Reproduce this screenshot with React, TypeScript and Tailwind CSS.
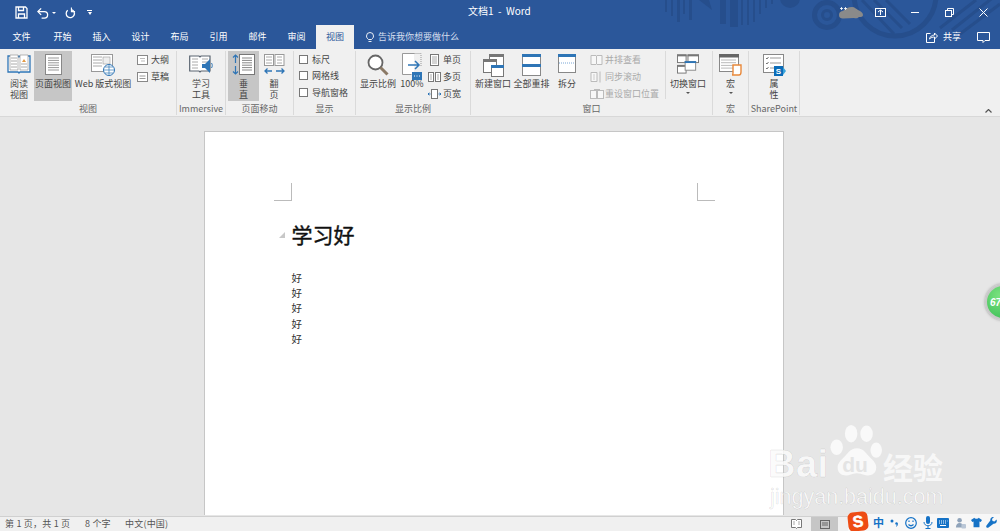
import React from "react";

const F = "font-['Noto_Sans_CJK_SC','Liberation_Sans',sans-serif]";

function Large({ w, selected, icon, label, label2, caret }: { w: number; selected?: boolean; icon: React.ReactNode; label: string; label2?: string; caret?: boolean }) {
  return (
    <div style={{ width: w }} className={`flex flex-col items-center h-[50px] shrink-0 ${selected ? "bg-[#c6c6c6]" : ""}`}>
      <div className="h-[27px] pt-[3px] flex items-start justify-center">{icon}</div>
      <div className="text-[9px] leading-[11px] text-[#444] whitespace-nowrap text-center">{label}</div>
      {label2 && <div className="text-[9px] leading-[11px] text-[#444] whitespace-nowrap text-center">{label2}</div>}
      {caret && <div className="mt-[3px] w-0 h-0 border-l-[2px] border-r-[2px] border-t-[2px] border-l-transparent border-r-transparent border-t-[#555]" />}
    </div>
  );
}

function Group({ w, label, children, pl = 0 }: { w: number; label: string; children: React.ReactNode; pl?: number }) {
  return (
    <div style={{ width: w, paddingLeft: pl }} className="h-[64px] shrink-0 border-r border-[#dadada] flex flex-col mt-[2px]">
      <div className="flex h-[52px] items-start">{children}</div>
      <div className="text-[9px] leading-[12px] text-[#666] text-center whitespace-nowrap" style={{ marginLeft: -pl }}>{label}</div>
    </div>
  );
}

function Small({ icon, label, dim }: { icon: React.ReactNode; label: string; dim?: boolean }) {
  return (
    <div className={`flex items-center h-[17px] gap-[1px] text-[9px] whitespace-nowrap ${dim ? "text-[#aaa]" : "text-[#444]"}`}>
      {icon}
      <span>{label}</span>
    </div>
  );
}

function Check({ label }: { label: string }) {
  return (
    <div className="flex items-center h-[16.500px] gap-[4px] text-[9px] text-[#444] whitespace-nowrap">
      <div className="w-[9px] h-[9px] border border-[#777] bg-white" />
      <span>{label}</span>
    </div>
  );
}

const Lines = ({ x, y, w, n, gap = 3, c = "#aaa" }: { x: number; y: number; w: number; n: number; gap?: number; c?: string }) => (
  <>
    {Array.from({ length: n }).map((_, i) => (
      <line key={i} x1={x} x2={x + w} y1={y + i * gap} y2={y + i * gap} stroke={c} strokeWidth="1" />
    ))}
  </>
);

const BookIcon = () => (
  <svg width="24" height="20" viewBox="0 0 24 20">
    <path d="M1 2h10l1 1 1-1h10v16H13l-1 1-1-1H1z" fill="#fff" stroke="#2e75b6" strokeWidth="1.300" />
    <path d="M3 1h8v15H3zM13 1h8v15h-8z" fill="#fff" stroke="#999" strokeWidth=".7" />
    <Lines x={4} y={4} w={6} n={4} />
    <Lines x={14} y={10} w={6} n={2} />
    <path d="M15 8l2-3 2 3z" fill="#e39a45" />
  </svg>
);
const PageIcon = () => (
  <svg width="17" height="21" viewBox="0 0 17 21">
    <rect x=".5" y=".5" width="16" height="20" fill="#fff" stroke="#888" />
    <Lines x={3} y={4} w={11} n={6} gap={2.400} c="#999" />
  </svg>
);
const WebIcon = () => (
  <svg width="24" height="23" viewBox="0 0 24 23">
    <rect x=".5" y=".5" width="21" height="17" fill="#fff" stroke="#999" />
    <Lines x={2} y={3} w={9} n={4} />
    <rect x="12" y="3" width="7" height="7" fill="#eee" stroke="#999" strokeWidth=".6" />
    <circle cx="18" cy="16" r="5.500" fill="#fff" stroke="#2e75b6" />
    <path d="M12.500 16h11M18 10.500v11M14 13h8M14 19h8" stroke="#2e75b6" strokeWidth=".7" />
  </svg>
);
const SpeakBook = () => (
  <svg width="25" height="21" viewBox="0 0 25 21">
    <path d="M.7 2h9.300l1 1 1-1h9v15h-9l-1 1-1-1H.7z" fill="#fff" stroke="#5a6470" strokeWidth="1.200" />
    <Lines x={3} y={5} w={6} n={4} />
    <Lines x={13} y={5} w={6} n={2} />
    <path d="M13 10h3l5-5v14l-5-5h-3z" fill="#2e75b6" />
    <path d="M22.500 9c1 1.500 1 3.500 0 5" stroke="#2e75b6" fill="none" />
  </svg>
);
const VertIcon = () => (
  <svg width="23" height="21" viewBox="0 0 23 21">
    <rect x="7.500" y=".5" width="15" height="20" fill="#fff" stroke="#777" />
    <Lines x={10} y={4} w={10} n={6} gap={2.400} c="#888" />
    <path d="M3.500 1v8M3.500 12v8M1 3.500l2.500-2.500 2.500 2.500M1 17.500l2.500 2.500 2.500-2.500" stroke="#2e75b6" fill="none" strokeWidth="1.200" />
  </svg>
);
const FlipIcon = () => (
  <svg width="21" height="21" viewBox="0 0 21 21">
    <rect x=".5" y=".5" width="9" height="11" fill="#fff" stroke="#999" />
    <rect x="11" y=".5" width="9" height="11" fill="#fff" stroke="#999" />
    <Lines x={2} y={3} w={6} n={3} />
    <Lines x={13} y={3} w={5} n={3} />
    <path d="M1 17h7M3.500 14.500L1 17l2.500 2.500M12 17h8M17.500 14.500L20 17l-2.500 2.500" stroke="#2e75b6" fill="none" strokeWidth="1.300" />
  </svg>
);
const Magnifier = () => (
  <svg width="22" height="23" viewBox="0 0 22 23">
    <circle cx="8.500" cy="8.500" r="7" fill="#fff" stroke="#666" strokeWidth="1.800" />
    <path d="M13.500 13.500l7 7" stroke="#8b7a66" strokeWidth="3" />
  </svg>
);
const HundredIcon = () => (
  <svg width="20" height="27" viewBox="0 0 20 27" className="-mt-[1px]">
    <path d="M.5.5h12v0M.5.5v21h9" fill="none" stroke="#999" />
    <path d="M12.500.5h6.500v13" fill="none" stroke="#999" strokeDasharray="1 1" />
    <path d="M1 1h11v20H1z" fill="#fff" />
    <path d="M6 12h11M13 8l4 4-4 4" stroke="#2e75b6" fill="none" strokeWidth="1.500" />
    <rect x="10" y="19" width="10" height="8" fill="#2e75b6" />
    <path d="M12 23h1M14.500 23h1M17 23h1" stroke="#fff" />
  </svg>
);
const NewWin = () => (
  <svg width="21" height="23" viewBox="0 0 21 23">
    <rect x="6.500" y=".5" width="14" height="11" fill="#fff" stroke="#777" />
    <rect x="6" y="0" width="15" height="3" fill="#777" />
    <rect x=".5" y="5.500" width="13" height="13" fill="#fff" stroke="#777" />
    <rect x="0" y="5" width="14" height="3" fill="#777" />
    <rect x="8.500" y="11.500" width="12" height="11" fill="#fff" stroke="#777" />
    <rect x="8" y="11" width="13" height="3" fill="#2e75b6" />
  </svg>
);
const Arrange = () => (
  <svg width="19" height="22" viewBox="0 0 19 22">
    <rect x=".5" y=".5" width="18" height="21" fill="#fff" stroke="#888" />
    <rect x="0" y="0" width="19" height="3" fill="#2e75b6" />
    <rect x="0" y="10" width="19" height="3" fill="#2e75b6" />
  </svg>
);
const SplitIcon = () => (
  <svg width="18" height="19" viewBox="0 0 18 19">
    <rect x=".5" y=".5" width="17" height="18" fill="#fff" stroke="#888" />
    <rect x="0" y="0" width="18" height="3" fill="#2e75b6" />
    <path d="M1 9h16" stroke="#7aa7d6" strokeDasharray="1 1" />
  </svg>
);
const SwitchWin = () => (
  <svg width="22" height="20" viewBox="0 0 23 20">
    <rect x="11.500" y=".5" width="11" height="8" fill="#fff" stroke="#777" />
    <rect x=".5" y=".5" width="9" height="8" fill="#fff" stroke="#777" />
    <rect x=".5" y="11.500" width="9" height="8" fill="#fff" stroke="#777" />
    <rect x="0" y="0" width="10" height="2" fill="#777" />
    <rect x="11" y="0" width="12" height="2" fill="#777" />
    <rect x="0" y="11" width="10" height="2" fill="#777" />
    <rect x="8.500" y="7.500" width="11" height="9" fill="#fff" stroke="#888" />
    <rect x="8" y="7" width="12" height="2" fill="#2e75b6" />
  </svg>
);
const MacroIcon = () => (
  <svg width="23" height="22" viewBox="0 0 23 22">
    <rect x=".5" y=".5" width="19" height="17" fill="#fff" stroke="#888" />
    <rect x="0" y="0" width="20" height="3.500" fill="#666" />
    <Lines x={2} y={6} w={15} n={4} gap={2.700} c="#bbb" />
    <path d="M14 11h8v7c0 2-1 3-2 3h-7c1 0 1-1 1-2z" fill="#fff" stroke="#e8883a" strokeWidth="1.400" />
  </svg>
);
const PropIcon = () => (
  <svg width="23" height="23" viewBox="0 0 23 23">
    <rect x=".5" y=".5" width="20" height="18" fill="#fff" stroke="#888" />
    <path d="M3 4l1 1 1.500-2M3 9l1 1 1.500-2M3 14l1 1 1.500-2" stroke="#555" fill="none" strokeWidth=".8" />
    <path d="M7 4h11M7 9h11M7 14h6" stroke="#999" />
    <rect x="11" y="12" width="9" height="10" fill="#0b6cb8" />
    <path d="M20 13l3 4-3 4z" fill="#38a3dc" />
    <text x="15.500" y="20" fontSize="8" fontWeight="700" fill="#fff" textAnchor="middle" fontFamily="Liberation Sans">S</text>
  </svg>
);

const Mini = ({ children, dim }: { children: React.ReactNode; dim?: boolean }) => (
  <svg width="14" height="12" viewBox="0 0 14 12" fill="none" className={`shrink-0 ${dim ? "opacity-50" : ""}`}>{children}</svg>
);
const OutlineMini = () => (
  <Mini><rect x="1.500" y="1.500" width="10" height="9" fill="#fff" stroke="#888" /><path d="M4 4.500h5M5 7h4" stroke="#bbb" /></Mini>
);
const DraftMini = () => (
  <Mini><rect x="1.500" y="1.500" width="10" height="9" fill="#fff" stroke="#888" /><path d="M3.500 5h6M3.500 7.500h6" stroke="#999" /></Mini>
);
const OnePage = () => (
  <Mini><rect x="2.500" y=".5" width="8" height="11" fill="#fff" stroke="#777" /><path d="M4 3h5M4 5h5M4 7h5M4 9h5" stroke="#aaa" /></Mini>
);
const MultiPage = () => (
  <Mini><rect x=".5" y="1.500" width="5" height="9" fill="#fff" stroke="#777" /><rect x="7.500" y="1.500" width="5" height="9" fill="#fff" stroke="#777" /><path d="M2 4h2M2 6h2M2 8h2M9 4h2M9 6h2M9 8h2" stroke="#aaa" /></Mini>
);
const WideMini = () => (
  <Mini><rect x="3.500" y="1.500" width="6" height="9" fill="#fff" stroke="#777" /><path d="M2.500 6H0M1.300 4.700L0 6l1.300 1.300M10.500 6H13M11.700 4.700L13 6l-1.300 1.300" stroke="#2e75b6" /></Mini>
);
const SideMini = () => (
  <Mini dim><path d="M1 1.500h5l.5.500.5-.500h5v9H7l-.5.500-.5-.500H1z" fill="#fff" stroke="#888" /><path d="M6.500 2v8" stroke="#888" /></Mini>
);
const SyncMini = () => (
  <Mini dim><path d="M1 1.500h6v9H1z" fill="#fff" stroke="#888" /><path d="M3 4h2M3 6h2M3 8h2" stroke="#aaa" /><path d="M10 .5v11" stroke="#888" /></Mini>
);
const ResetMini = () => (
  <Mini dim><rect x=".5" y="2.500" width="6" height="8" fill="#fff" stroke="#888" /><rect x="7.500" y="2.500" width="6" height="8" fill="#fff" stroke="#888" /><path d="M4 1.500h6" stroke="#888" /></Mini>
);

function Decor() {
  const bars: [number, number, number][] = [
    [665, 2, 12], [671, 2, 16], [677, 3, 22], [683, 2, 14], [689, 3, 20],
    [720, 6, 24], [730, 8, 27], [741, 2, 25], [747, 2, 25], [753, 2, 22], [759, 2, 14], [765, 2, 8], [771, 2, 4],
  ];
  return (
    <svg className="absolute right-0 top-0" width="360" height="49" viewBox="640 0 360 49" fill="none">
      <g fill="#264e8c">
        {bars.map(([x, w, h]) => (
          <rect key={x} x={x} y={0} width={w} height={h} />
        ))}
        <path d="M699 0h10l3 10z" />
      </g>
      <circle cx="790" cy="-2" r="10" fill="#264e8c" />
      <circle cx="827" cy="15" r="12.500" stroke="#264e8c" strokeWidth="5" />
      <circle cx="827" cy="15" r="4.500" stroke="#264e8c" strokeWidth="3" />
      <circle cx="895" cy="-5" r="41" stroke="#264e8c" strokeWidth="5" />
      <g stroke="#264e8c" strokeWidth="3">
        <path d="M862 0l32 34M874 0l28 28M886 0l24 24" />
        <path d="M952 30L1000-8M960 34l40-30M940 28l36-28" />
      </g>
    </svg>
  );
}

function TitleBar() {
  return (
    <div className="relative z-10 h-[25px] flex items-center">
      <div className="flex items-center pl-[15px] gap-[9px]">
        <svg width="13" height="13" viewBox="0 0 13 13" fill="none" stroke="#fff" strokeWidth="1.300"><path d="M1 1h9.500L12 2.500V12H1z" /><path d="M3.500 1v3.500h5V1M3.500 12V8h6v4" /></svg>
        <div className="flex items-center gap-[3px]">
          <svg width="12" height="12" viewBox="0 0 13 12" fill="none" stroke="#fff" strokeWidth="1.400"><path d="M1.500 4.500H8a3.500 3.500 0 0 1 0 7H5" /><path d="M4.500 1L1 4.500 4.500 8" /></svg>
          <div className="w-0 h-0 border-l-[2px] border-r-[2px] border-t-[2px] border-l-transparent border-r-transparent border-t-white" />
        </div>
        <svg width="11" height="12" viewBox="0 0 12 12" fill="none" stroke="#fff" strokeWidth="1.400"><path d="M7 2.200a4.500 4.500 0 1 1-4 .8" /><path d="M7 0v4.500H11" strokeWidth="1.200" /></svg>
        <div className="flex flex-col items-center gap-[1px] ml-[2px]">
          <div className="w-[5px] h-px bg-white" />
          <div className="w-0 h-0 border-l-[2.500px] border-r-[2.500px] border-t-[3px] border-l-transparent border-r-transparent border-t-white" />
        </div>
      </div>
      <div className="flex-1" />
      <div className="absolute left-[468px] top-[3px] text-[10px] leading-[15px] text-white whitespace-nowrap">文档1 &nbsp;-&nbsp; Word</div>
      <div className="flex items-center mr-[12px]">
        <svg width="24" height="12" viewBox="0 0 24 12" className="mr-[12px]">
          <path d="M0 8c0-3 2-4 4-4 2-2 5-4 9-4 3 0 4 2 6 3 3 1 5 3 5 5 0 2-2 2-4 2-2 2-4 1-5 1l-11 .5C1 11.500 0 10 0 8z" fill="#8a8a8a" />
          <path d="M1 1.500h3M2.500 0v3M5 1.500h3M6.500 0v3" stroke="#fff" strokeWidth=".8" />
        </svg>
        <svg width="11" height="9" viewBox="0 0 11 9" fill="none" stroke="#fff" className="mr-[25px]"><rect x=".5" y=".5" width="10" height="8" /><path d="M3 4l2.500-2L8 4M5.500 2v5" /></svg>
        <div className="w-[8px] h-px bg-white mr-[26px]" />
        <svg width="9" height="9" viewBox="0 0 9 9" fill="none" stroke="#fff" className="mr-[25px]"><rect x=".5" y="2.500" width="6" height="6" /><path d="M2.500 2.500V.5h6v6h-2" /></svg>
        <svg width="9" height="9" viewBox="0 0 9 9" stroke="#fff"><path d="M.5.5l8 8M8.500.5l-8 8" /></svg>
      </div>
    </div>
  );
}

function Tabs() {
  const tabs: [string, number][] = [["文件", 43], ["开始", 39], ["插入", 39], ["设计", 39], ["布局", 39], ["引用", 39], ["邮件", 39], ["审阅", 39]];
  return (
    <div className="relative z-10 h-[24px] flex items-end text-[9px] text-white">
      {tabs.map(([t, w]) => (
        <div key={t} style={{ width: w }} className="h-[24px] flex items-center justify-center shrink-0">{t}</div>
      ))}
      <div className="w-[38px] h-[24px] bg-[#f0f0f0] text-[#2b579a] flex items-center justify-center shrink-0">视图</div>
      <div className="flex items-center ml-[12px] gap-[4px] h-[24px] text-[#d5dfef]">
        <svg width="8" height="11" viewBox="0 0 8 11" fill="none" stroke="#fff" strokeWidth=".9"><path d="M2.500 7.500C1.500 6.500.5 5.700.5 4a3.500 3.500 0 0 1 7 0c0 1.700-1 2.500-2 3.500zM2.500 9.500h3" /></svg>
        <span>告诉我你想要做什么</span>
      </div>
      <div className="flex-1" />
      <div className="flex items-center h-[24px] gap-[5px] mr-[16px]">
        <svg width="12" height="11" viewBox="0 0 12 11" fill="none" stroke="#fff"><path d="M4.500 1.500H.5v9h8V7" /><path d="M3.500 7c.5-2.500 2.500-4 5-4V1l3 3-3 3V5C6.500 5 5 5.500 3.500 7z" /></svg>
        <span>共享</span>
      </div>
      <div className="flex items-center h-[24px] mr-[10px]">
        <svg width="13" height="11" viewBox="0 0 13 11" fill="none" stroke="#fff"><path d="M.5.500h12v8H8L6 10.500V8.500H.5z" /></svg>
      </div>
    </div>
  );
}

function Ribbon() {
  return (
    <div className="h-[68px] bg-[#f0f0f0] border-b border-[#d8d8d8] flex relative pb-[2px] text-[#444]">
      <Group w={177} label="视图" pl={4}>
        <Large w={30} icon={<BookIcon />} label="阅读" label2="视图" />
        <Large w={38} selected icon={<PageIcon />} label="页面视图" />
        <Large w={62} icon={<WebIcon />} label="Web 版式视图" />
        <div className="flex flex-col ml-[2px]">
          <Small label="大纲" icon={<OutlineMini />} />
          <Small label="草稿" icon={<DraftMini />} />
        </div>
      </Group>
      <Group w={49} label="Immersive">
        <Large w={48} icon={<SpeakBook />} label="学习" label2="工具" />
      </Group>
      <Group w={68} label="页面移动" pl={2}>
        <Large w={31} selected icon={<VertIcon />} label="垂" label2="直" />
        <Large w={30} icon={<FlipIcon />} label="翻" label2="页" />
      </Group>
      <Group w={62} label="显示" pl={5}>
        <div className="flex flex-col">
          <Check label="标尺" />
          <Check label="网格线" />
          <Check label="导航窗格" />
        </div>
      </Group>
      <Group w={115} label="显示比例" pl={4}>
        <Large w={36} icon={<Magnifier />} label="显示比例" />
        <Large w={32} icon={<HundredIcon />} label="100%" />
        <div className="flex flex-col">
          <Small label="单页" icon={<OnePage />} />
          <Small label="多页" icon={<MultiPage />} />
          <Small label="页宽" icon={<WideMini />} />
        </div>
      </Group>
      <Group w={242} label="窗口" pl={4}>
        <Large w={36} icon={<NewWin />} label="新建窗口" />
        <Large w={41} icon={<Arrange />} label="全部重排" />
        <Large w={30} icon={<SplitIcon />} label="拆分" />
        <div className="flex flex-col ml-[8px]">
          <Small dim label="并排查看" icon={<SideMini />} />
          <Small dim label="同步滚动" icon={<SyncMini />} />
          <Small dim label="重设窗口位置" icon={<ResetMini />} />
        </div>
        <div className="w-px h-[48px] bg-[#dadada] ml-[6px] mr-[4px]" />
        <Large w={36} icon={<SwitchWin />} label="切换窗口" caret />
      </Group>
      <Group w={36} label="宏">
        <Large w={35} icon={<MacroIcon />} label="宏" caret />
      </Group>
      <Group w={51} label="SharePoint">
        <Large w={50} icon={<PropIcon />} label="属" label2="性" />
      </Group>
      <svg className="absolute right-[8px] bottom-[3px]" width="7" height="4" viewBox="0 0 7 4" fill="none" stroke="#555" strokeWidth="1.200"><path d="M.5 3.500l3-3 3 3" /></svg>
    </div>
  );
}

function Crop({ right }: { right?: boolean }) {
  return <div className={`w-[18px] h-[18px] border-b border-[#bbb] ${right ? "border-l" : "border-r"}`} />;
}

function Page() {
  return (
    <div className="ml-[204px] mt-[14px] w-[580px] h-[384px] bg-white border-x border-t border-[#c6c6c6] pl-[69px] pr-[68px] pt-[51px] shrink-0">
      <div className="flex justify-between">
        <Crop />
        <Crop right />
      </div>
      <div className="relative pl-[17.500px] mt-[18px] text-[21px] leading-[30px] font-normal text-[#111] [-webkit-text-stroke:0.4px_#111]">
        <div className="absolute left-[5px] top-[13px] w-0 h-0 border-b-[6px] border-l-[6px] border-b-[#c8c8c8] border-l-transparent" />
        学习好
      </div>
      <div className="pl-[17.500px] mt-[21px] text-[10.500px] leading-[15.200px] text-[#333]">
        <div>好</div><div>好</div><div>好</div><div>好</div><div>好</div>
      </div>
    </div>
  );
}

function Status() {
  return (
    <div className="h-[15px] bg-[#f0f0f0] border-t border-[#d0d0d0] flex items-center text-[9px] text-[#555] relative shrink-0 tracking-[0.2px]">
      <span className="ml-[5px] w-[80px] whitespace-nowrap">第 1 页，共 1 页</span>
      <span className="w-[40px] whitespace-nowrap">8 个字</span>
      <span className="whitespace-nowrap">中文(中国)</span>
      <div className="flex-1" />
      <svg width="11" height="10" viewBox="0 0 11 10" className="mr-[9px]"><path d="M.5.500h4l1 1 1-1h4v8h-4l-1 1-1-1h-4z" fill="#fff" stroke="#777" /><path d="M2 3h2M2 5h2M7 3h2M7 5h2" stroke="#aaa" /></svg>
      <div className="w-[27px] h-[15px] bg-[#c6c6c6] flex items-center justify-center mr-[162px]">
        <svg width="10" height="9" viewBox="0 0 10 9" fill="none" stroke="#666"><rect x=".5" y=".5" width="9" height="8" /><path d="M2 3h6M2 5h6" /></svg>
      </div>
    </div>
  );
}

function Ime() {
  const b = "#1572c6";
  return (
    <div className="absolute right-0 bottom-0 w-[152px] h-[17px] flex items-center bg-[#f7f7f7] pl-[25px]">
      <div className="absolute left-0 top-[-2px] w-[20px] h-[19px] rounded-[5px] bg-[#ee4c14] -rotate-[6deg] flex items-center justify-center text-white font-bold text-[16px] leading-[19px] font-['Liberation_Sans'] [-webkit-text-stroke:0.5px_#fff]">S</div>
      <span className="text-[11px] font-bold leading-[17px] w-[11px]" style={{ color: b }}>中</span>
      <svg width="8" height="8" viewBox="0 0 8 8" fill={b} className="ml-[6px]"><circle cx="2" cy="2" r="1.500" /><circle cx="6.500" cy="4.500" r="1.200" /><path d="M7.500 4.500c0 1.500-.5 2.500-1.500 3" stroke={b} fill="none" /></svg>
      <svg width="12" height="12" viewBox="0 0 12 12" fill="none" stroke={b} strokeWidth="1.200" className="ml-[7px]"><circle cx="6" cy="6" r="5.300" /><path d="M3.500 7.500c1.500 1.500 3.500 1.500 5 0" /><path d="M4 3.500v1.500M8 3.500v1.500" /></svg>
      <svg width="10" height="13" viewBox="0 0 10 13" fill={b} className="ml-[6px]"><rect x="3" y="0" width="4" height="8" rx="2" /><path d="M1 6c0 5 8 5 8 0M5 10v2M2.500 12.500h5" stroke={b} fill="none" /></svg>
      <svg width="12" height="10" viewBox="0 0 12 10" fill={b} className="ml-[4px]"><rect width="12" height="10" rx="1" /><path d="M2 3h1M4 3h1M6 3h1M8 3h1M10 3h.5M2 5h1M4 5h1M6 5h1M8 5h1M3 7.500h6" stroke="#fff" /></svg>
      <svg width="11" height="12" viewBox="0 0 12 12" fill="#8fa3ba" className="ml-[6px]"><circle cx="5" cy="3" r="2.500" /><path d="M1 11c0-3 1.500-5 4-5s4 2 4 5z" /><rect x="7" y="7" width="5" height="5" rx="1" fill="#b9c6d6" /></svg>
      <svg width="11" height="11" viewBox="0 0 13 11" fill={b} className="ml-[5px]"><path d="M4 0L0 2.500 1.500 5 3 4.300V11h7V4.300l1.500.700L13 2.500 9 0C8.500 1.500 4.500 1.500 4 0z" /></svg>
      <svg width="11" height="11" viewBox="0 0 11 11" fill={b} className="ml-[4px]"><path d="M10.500 2.500L8.500 4.500 6.500 4l-.5-2L8 0C6-.5 4 1 4.300 3.500L.5 8.500c-1 1.500.7 3 2 2l5-3.800c2.500.3 4-2 3-4.200z" /></svg>
    </div>
  );
}

function Watermark() {
  const o = "[-webkit-text-stroke:0.6px_rgba(0,0,0,0.12)]";
  return (
    <div className="absolute left-[768px] top-[424px] w-[180px] h-[84px] text-[#fbfbfb]/85 pointer-events-none">
      <svg className="absolute left-[60px] top-0" width="54" height="58" viewBox="4 0 56 60" fill="currentColor">
        <ellipse cx="28" cy="10" rx="6.500" ry="9" />
        <ellipse cx="44" cy="10" rx="6.500" ry="8.500" />
        <ellipse cx="13" cy="24" rx="6.500" ry="8" />
        <ellipse cx="54" cy="27" rx="6" ry="8" />
        <path d="M34 25c7 0 10 6 15 11 4 4 5 6 5 9 0 7-6 9-11 8-4-1-7-2-9-2s-5 1-9 2c-5 1-11-1-11-8 0-3 1-5 5-9 5-5 8-11 15-11z" />
      </svg>
      <div className="absolute left-[62px] top-[28px] w-[50px] text-center text-[#e4e4e4] text-[21px] font-bold leading-[26px] font-['Liberation_Sans']">du</div>
      <div className={`absolute left-0 top-[18px] text-[38px] font-bold leading-[44px] font-['Liberation_Sans'] tracking-[0.5px] ${o}`}>Bai</div>
      <div className="absolute left-[115px] top-[25px] text-[30px] font-bold leading-[34px] whitespace-nowrap">经验</div>
      <div className={`absolute left-[2px] top-[60px] text-[21.500px] leading-[26px] font-['Liberation_Sans'] whitespace-nowrap ${o}`}>jingyan.baidu.com</div>
    </div>
  );
}

export default function App() {
  return (
    <div className={`relative w-[1000px] h-[531px] overflow-hidden bg-[#e6e6e6] flex flex-col ${F}`}>
      <div className="relative h-[49px] bg-[#2b579a] shrink-0">
        <Decor />
        <TitleBar />
        <Tabs />
      </div>
      <Ribbon />
      <div className="flex-1 min-h-0 overflow-hidden flex">
        <Page />
      </div>
      <Status />
      <Watermark />
      <Ime />
      <div className="absolute left-[985px] top-[284px] w-[36px] h-[36px] rounded-full bg-[radial-gradient(circle_at_40%_30%,#7be27f,#35bb52)] border-[2px] border-[#c8c8c8] shadow-[0_0_3px_#999] flex items-center pl-[3px] text-[10px] font-bold italic text-white font-['Liberation_Sans']">67</div>
    </div>
  );
}
